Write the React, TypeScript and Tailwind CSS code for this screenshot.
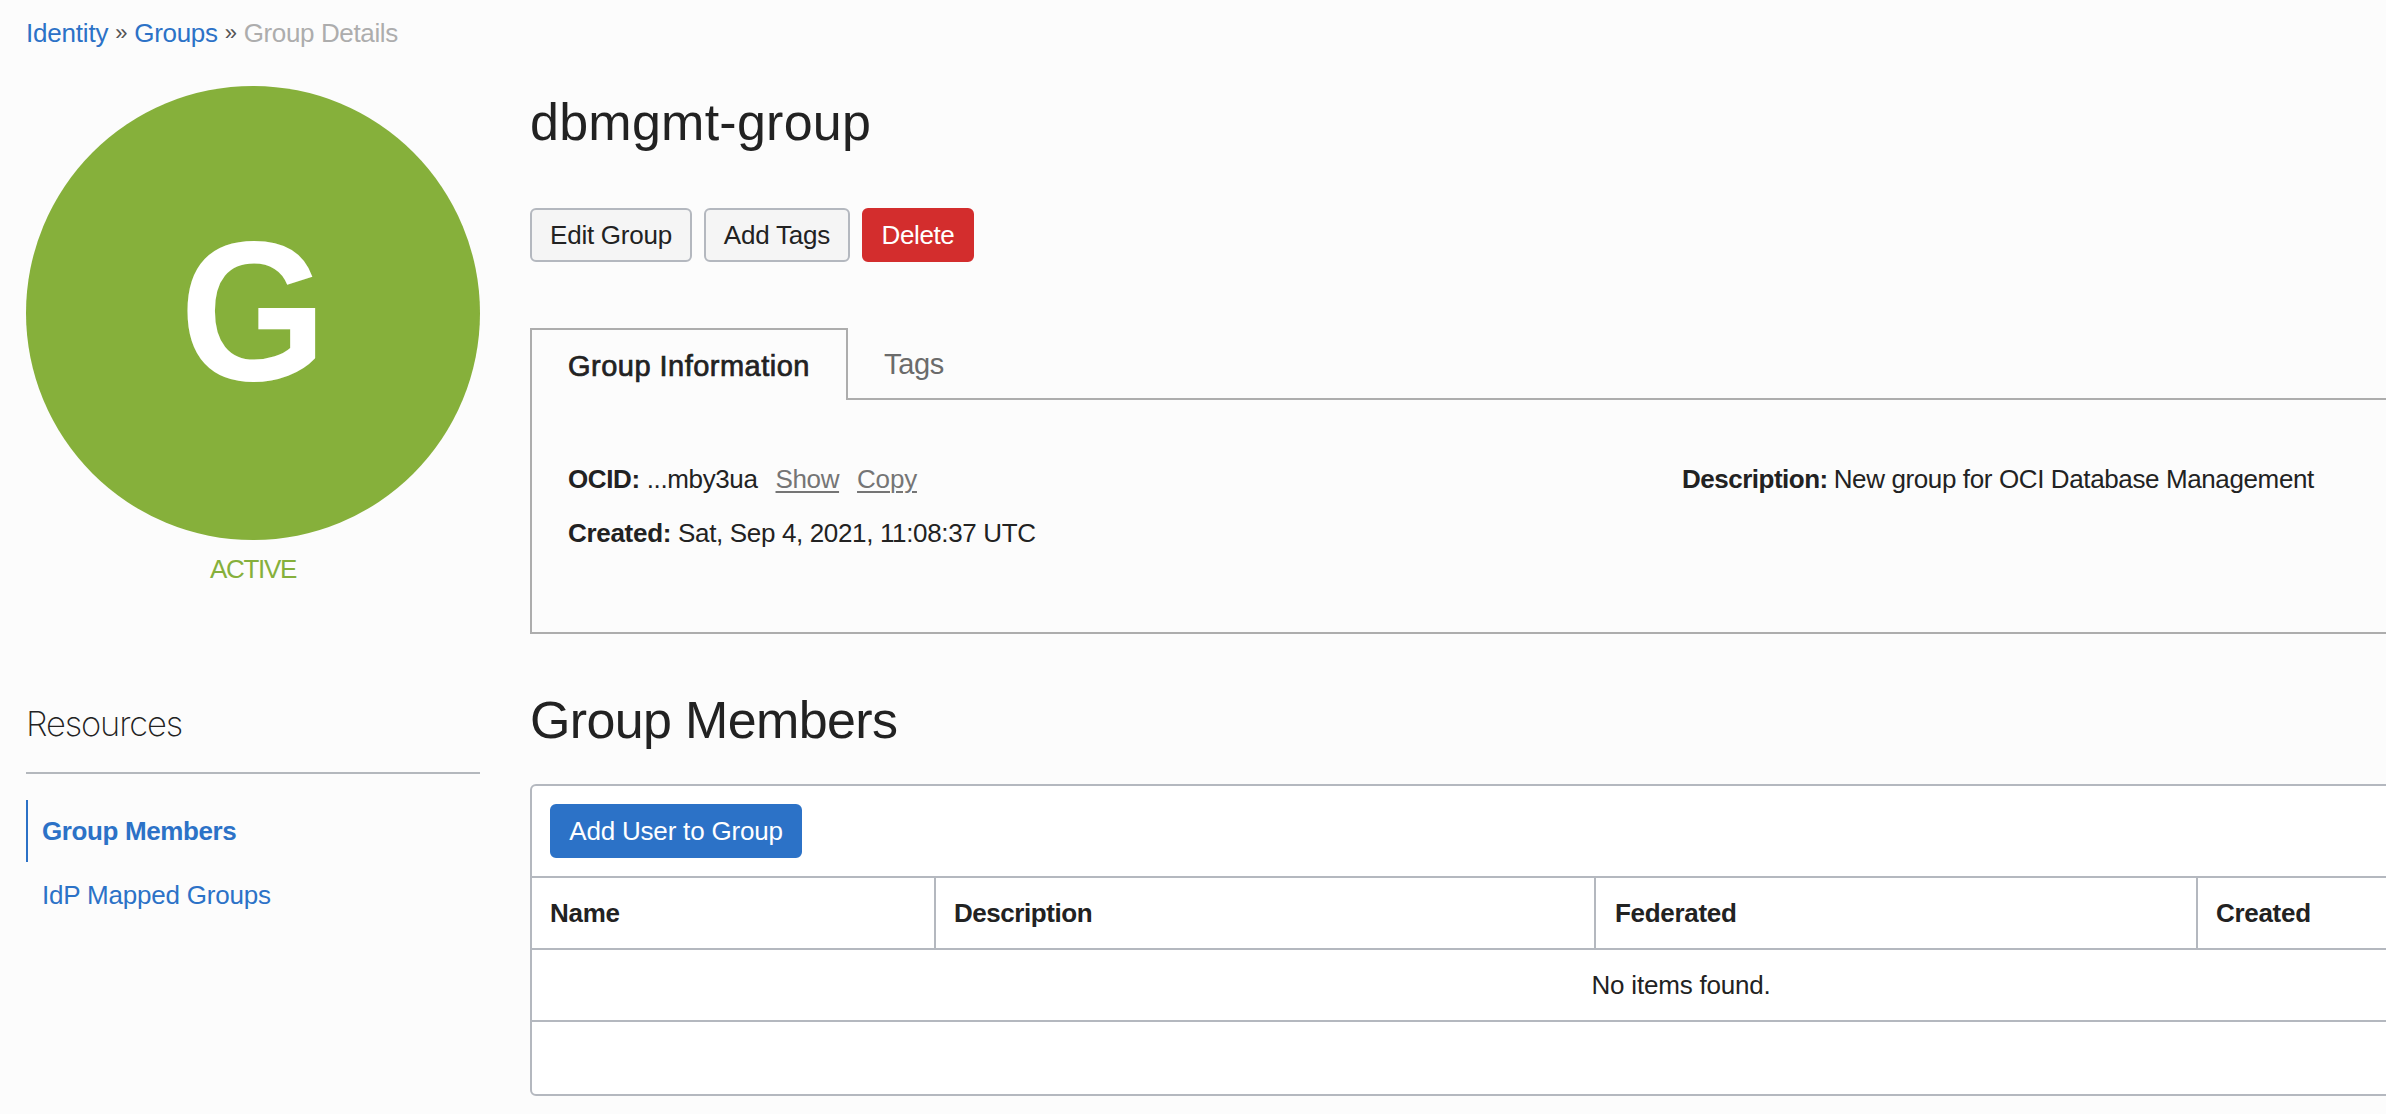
import type { ReactNode } from 'react'

function Breadcrumb() {
  return (
    <nav className="mt-[13px] flex h-10 items-center pl-[26px] leading-10 tracking-[-0.37px] whitespace-pre">
      <a className="tracking-[-0.2px] text-[#2c72c7]">Identity</a>
      <span className="w-[26px] text-center text-[22px] text-[#555]">»</span>
      <a className="tracking-[-0.3px] text-[#2c72c7]">Groups</a>
      <span className="w-[26px] text-center text-[22px] text-[#555]">»</span>
      <span className="text-[#adadad]">Group Details</span>
    </nav>
  )
}

function Sidebar() {
  return (
    <aside className="w-[454px] shrink-0 pt-[33px]">
      <div className="flex size-[454px] items-center justify-center rounded-full bg-[#86b03b] pb-[5px]">
        <span className="scale-x-[0.95] text-[199px] leading-[202px] font-bold text-white">G</span>
      </div>
      <div className="mt-[9px] text-center leading-10 tracking-[-1.35px] text-[#86b03b]">ACTIVE</div>
      <div className="mt-[114px] h-[71px] border-b-2 border-[#b4b8bd] font-[Inter] text-[34.5px] leading-[42px] font-extralight tracking-[-1.15px] text-[#222]">
        Resources
      </div>
      <div className="mt-[26px] h-[62px] border-l-2 border-[#2c72c7] pl-[14px] leading-[62px] font-bold tracking-[-0.38px] text-[#2c72c7]">
        Group Members
      </div>
      <div className="mt-[2px] h-[62px] pl-4 leading-[62px] tracking-[-0.2px] text-[#2c72c7]">IdP Mapped Groups</div>
    </aside>
  )
}

function Button({ className, children }: { className: string; children: ReactNode }) {
  return (
    <button className={'h-[54px] rounded-[6px] border-2 text-center leading-[50px] whitespace-nowrap ' + className}>
      {children}
    </button>
  )
}

function InfoPanel() {
  return (
    <section className="mt-[66px]">
      <div className="flex h-[72px]">
        <div className="z-10 h-[72px] w-[318px] border-2 border-b-0 border-[#adadad] bg-[#fcfcfc] pl-[36px] text-[29px] leading-[72px] tracking-[0.48px] whitespace-nowrap text-[#222] [-webkit-text-stroke:0.7px_#222]">
          Group Information
        </div>
        <div className="h-[72px] grow border-b-2 border-[#adadad] pl-[36px] text-[29px] leading-[72px] tracking-[-0.3px] text-[#6b6b6b]">
          Tags
        </div>
      </div>
      <div className="grid h-[234px] grid-cols-2 border-2 border-t-0 border-[#adadad] pt-[52px] leading-[54px]">
        <div className="pl-[36px]">
          <div className="flex">
            <b className="mr-[7px]">OCID:</b>
            <span>...mby3ua</span>
            <a className="ml-[18px] text-[#757575] underline decoration-2 underline-offset-[3px]">Show</a>
            <a className="ml-[18px] tracking-[-0.2px] text-[#757575] underline decoration-2 underline-offset-[3px]">Copy</a>
          </div>
          <div className="flex">
            <b className="mr-[7px] tracking-[-0.3px]">Created:</b>
            <span className="tracking-[-0.35px]">Sat, Sep 4, 2021, 11:08:37 UTC</span>
          </div>
        </div>
        <div className="flex pl-px">
          <b className="mr-[6px] tracking-[-0.5px]">Description:</b>
          <span>New group for OCI Database Management</span>
        </div>
      </div>
    </section>
  )
}

function MembersTable() {
  return (
    <section>
      <h2 className="mt-[54px] text-[52px] leading-[64px] tracking-[-0.65px]">Group Members</h2>
      <div className="mt-[32px] h-[312px] rounded-[6px] border-2 border-[#b4b8bf] bg-white">
        <div className="h-[90px] pt-[18px] pl-[18px]">
          <Button className="w-[252px] border-[#2c72c7] bg-[#2c72c7] tracking-[-0.2px] text-white">Add User to Group</Button>
        </div>
        <div className="grid h-[74px] grid-cols-[404px_660px_602px_1fr] border-y-2 border-[#b4b8bf] leading-[70px] font-bold tracking-[-0.3px]">
          <div className="border-r-2 border-[#b4b8bf] pl-[18px]">Name</div>
          <div className="border-r-2 border-[#b4b8bf] pl-[18px] tracking-[-0.45px]">Description</div>
          <div className="border-r-2 border-[#b4b8bf] pl-[19px]">Federated</div>
          <div className="pl-[18px]">Created</div>
        </div>
        <div className="h-[72px] border-b-2 border-[#b4b8bf] text-center leading-[70px] tracking-[-0.2px]">No items found.</div>
      </div>
    </section>
  )
}

export default function App() {
  return (
    <div className="flow-root h-[1114px] w-full overflow-hidden bg-[#fcfcfc] font-['Liberation_Sans',Arial,sans-serif] text-[26px] tracking-[-0.38px] text-[#222]">
      <Breadcrumb />
      <div className="flex gap-[50px] pl-[26px]">
        <Sidebar />
        <main className="w-[2302px] shrink-0 pt-[37px]">
          <h1 className="text-[52px] leading-[64px] tracking-[0.25px]">dbmgmt-group</h1>
          <div className="mt-[54px] flex gap-3">
            <Button className="w-[162px] border-[#b4b8bf] bg-[#f5f5f5] tracking-[-0.25px]">Edit Group</Button>
            <Button className="w-[146px] border-[#b4b8bf] bg-[#f5f5f5] tracking-[-0.2px]">Add Tags</Button>
            <Button className="w-[112px] border-[#d32d2d] bg-[#d32d2d] text-white">Delete</Button>
          </div>
          <InfoPanel />
          <MembersTable />
        </main>
      </div>
    </div>
  )
}
